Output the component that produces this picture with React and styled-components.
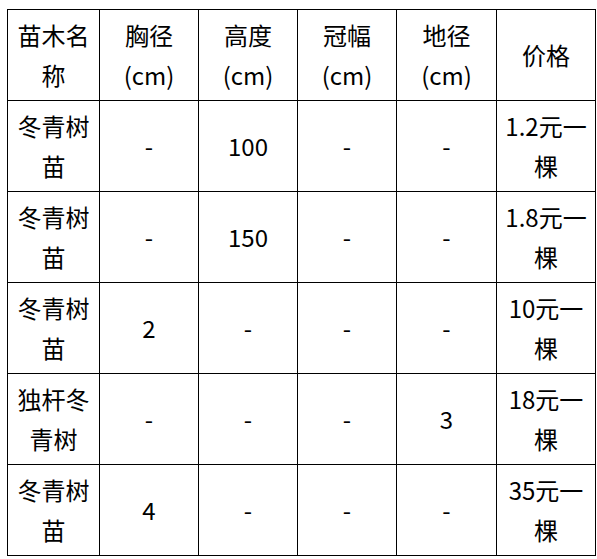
import React from "react";
import styled, { createGlobalStyle } from "styled-components";

const GlobalStyle = createGlobalStyle`
  body {
    margin: 0;
    background: #ffffff;
    font-family: "Noto Sans CJK SC", "Noto Sans", sans-serif;
    color: #000000;
  }
`;

const Page = styled.div`
  padding: 9px 0 0 7px;
`;

const Table = styled.table`
  border-collapse: collapse;
  table-layout: fixed;
  width: 588px;
`;

const Col = styled.col`
  width: ${(p) => p.$w}px;
`;

const Row = styled.tr`
  height: 91px;
`;

const Cell = styled.td`
  border: 1px solid #000000;
  padding: 0 6px;
  text-align: center;
  vertical-align: middle;
  font-size: 24px;
  font-weight: 400;
  line-height: 40px;
  line-break: normal;
`;

const widths = [92, 99, 99, 99, 100, 99];

const header = ["苗木名称", "胸径(cm)", "高度(cm)", "冠幅(cm)", "地径(cm)", "价格"];

const rows = [
  ["冬青树苗", "-", "100", "-", "-", "1.2元一棵"],
  ["冬青树苗", "-", "150", "-", "-", "1.8元一棵"],
  ["冬青树苗", "2", "-", "-", "-", "10元一棵"],
  ["独杆冬青树", "-", "-", "-", "3", "18元一棵"],
  ["冬青树苗", "4", "-", "-", "-", "35元一棵"],
];

export default function App() {
  return (
    <>
      <GlobalStyle />
      <Page>
        <Table>
          <colgroup>
            {widths.map((w, i) => (
              <Col key={i} $w={w} />
            ))}
          </colgroup>
          <tbody>
            <Row>
              {header.map((h, i) => (
                <Cell key={i}>{h}</Cell>
              ))}
            </Row>
            {rows.map((r, i) => (
              <Row key={i}>
                {r.map((c, j) => (
                  <Cell key={j}>{c}</Cell>
                ))}
              </Row>
            ))}
          </tbody>
        </Table>
      </Page>
    </>
  );
}
